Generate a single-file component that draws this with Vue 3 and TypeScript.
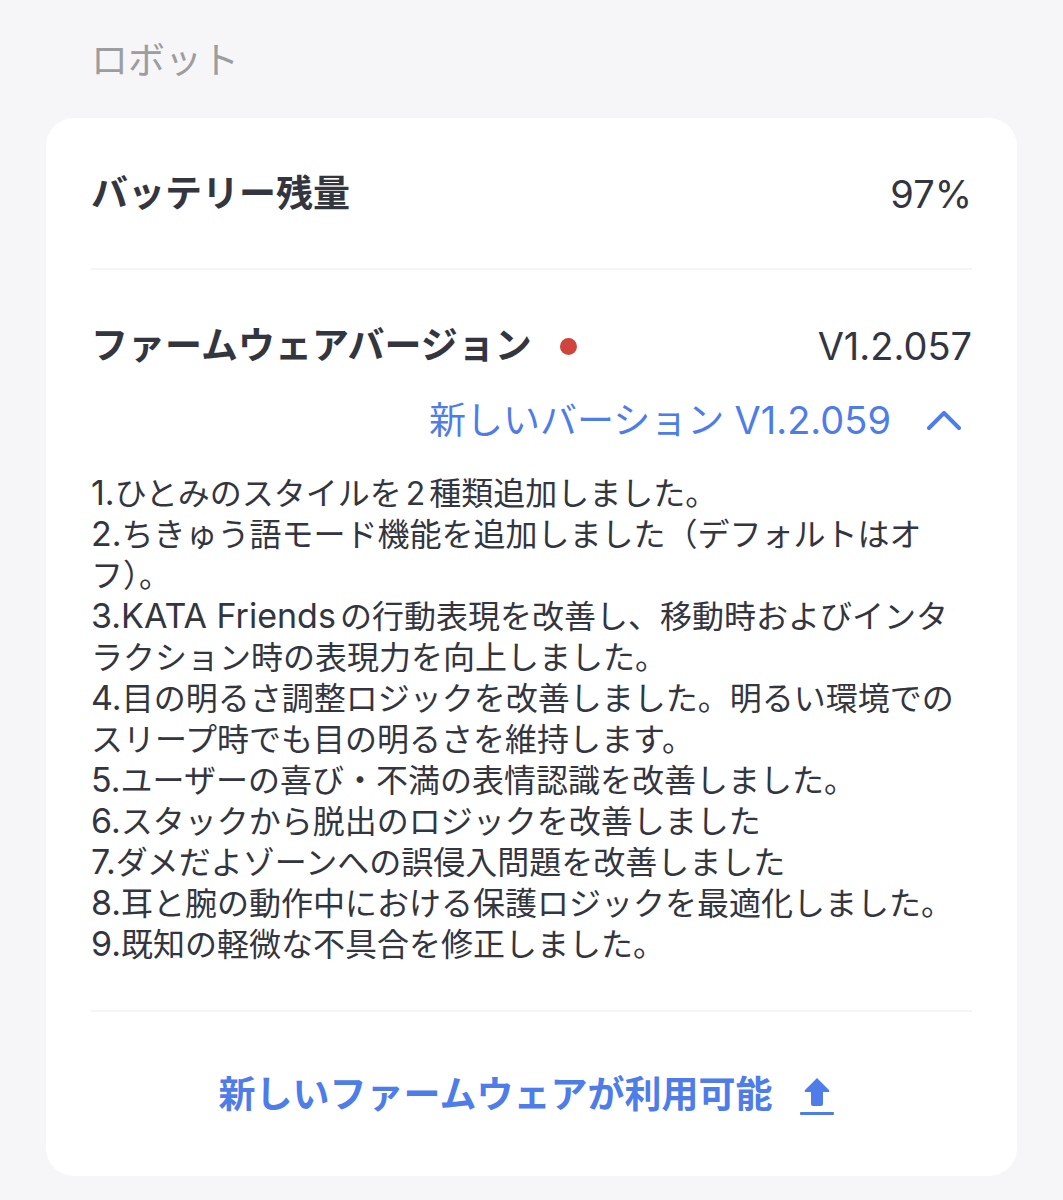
<script setup lang="ts">
import { ref } from 'vue'

interface Note {
  lead: string
  text: string
}

const expanded = ref<boolean>(true)
const battery = '97%'
const currentVersion = 'V1.2.057'
const newVersion = 'V1.2.059'

const notes: Note[] = [
  { lead: '1.', text: 'ひとみのスタイルを2種類追加しました。' },
  { lead: '2.', text: 'ちきゅう語モード機能を追加しました（デフォルトはオフ）。' },
  {
    lead: '3.KATA Friends',
    text: 'の行動表現を改善し、移動時およびインタラクション時の表現力を向上しました。',
  },
  {
    lead: '4.',
    text: '目の明るさ調整ロジックを改善しました。明るい環境でのスリープ時でも目の明るさを維持します。',
  },
  { lead: '5.', text: 'ユーザーの喜び・不満の表情認識を改善しました。' },
  { lead: '6.', text: 'スタックから脱出のロジックを改善しました' },
  { lead: '7.', text: 'ダメだよゾーンへの誤侵入問題を改善しました' },
  { lead: '8.', text: '耳と腕の動作中における保護ロジックを最適化しました。' },
  { lead: '9.', text: '既知の軽微な不具合を修正しました。' },
]
</script>

<template>
  <main class="page" lang="ja">
    <h1 class="section-title">ロボット</h1>
    <section class="card">
      <div class="row battery">
        <h2 class="label">バッテリー残量</h2>
        <span class="value">{{ battery }}</span>
      </div>
      <div class="firmware">
        <div class="row">
          <h2 class="label">ファームウェアバージョン<span class="dot"></span></h2>
          <span class="value">{{ currentVersion }}</span>
        </div>
        <button
          class="toggle"
          type="button"
          :aria-expanded="expanded"
          aria-controls="release-notes"
          @click="expanded = !expanded"
        >
          <span>新しいバーション <span class="version">{{ newVersion }}</span></span>
          <svg class="chevron" :class="{ closed: !expanded }" viewBox="0 0 36 20" aria-hidden="true">
            <path d="M3 17 18 2 33 17" />
          </svg>
        </button>
        <div v-show="expanded" id="release-notes" class="notes">
          <p v-for="note in notes" :key="note.lead"><span class="lead">{{ note.lead }}</span>{{ note.text }}</p>
        </div>
      </div>
      <button class="update" type="button">
        <span>新しいファームウェアが利用可能</span>
        <svg class="upload" viewBox="0 0 36 44" aria-hidden="true">
          <path
            d="M18 5 30 17Q31 19 29 19H24V31Q24 33 22 33H14Q12 33 12 31V19H7Q5 19 6 17Z"
          />
          <rect x="1" y="39" width="34" height="3" rx="1" />
        </svg>
      </button>
    </section>
  </main>
</template>

<style>
body {
  margin: 0;
  background: #f6f6f9;
}
</style>

<style scoped>
.page {
  padding: 33px 46px 24px;
  color: #33353f;
  font-family: Inter, 'Noto Sans CJK JP', sans-serif;
  font-size: 37px;
  line-height: 56px;
  text-autospace: normal;
}

h1,
h2,
p {
  margin: 0;
}

button {
  border: 0;
  padding: 0;
  background: none;
  color: #4e7ce8;
  font: inherit;
  cursor: pointer;
}

.section-title {
  padding: 0 45px;
  margin-bottom: 29px;
  color: #9c9d9f;
  font-size: 37px;
  font-weight: 400;
}

.card {
  padding: 0 45px;
  border-radius: 28px;
  background: #fff;
}

.row {
  display: flex;
  align-items: center;
  justify-content: space-between;
}

.battery {
  padding: 48px 0 46px;
  border-bottom: 2px solid #f5f4f6;
}

.label {
  display: flex;
  align-items: center;
  font-size: 37px;
  font-weight: 600;
}

.dot {
  width: 17px;
  height: 17px;
  margin-left: 28px;
  border-radius: 50%;
  background: #d0443e;
}

.value,
.version {
  font-size: 38px;
}

.firmware {
  padding: 48px 0 45px;
  border-bottom: 2px solid #f5f4f6;
}

.toggle {
  display: flex;
  align-items: center;
  gap: 35px;
  margin: 18px 0 24px auto;
  padding-right: 10px;
}

.chevron {
  width: 36px;
  height: 20px;
  fill: none;
  stroke: currentColor;
  stroke-width: 4;
  stroke-linecap: round;
  stroke-linejoin: round;
}

.closed {
  transform: rotate(180deg);
}

.notes {
  padding-right: 10px;
  font-size: 32px;
  line-height: 41px;
}

.lead {
  font-size: 34px;
  line-height: 32px;
}

.update {
  display: flex;
  align-items: center;
  justify-content: center;
  gap: 27px;
  width: 100%;
  padding: 55px 9px 53px 0;
  font-weight: 600;
}

.upload {
  width: 36px;
  height: 44px;
  fill: currentColor;
}
</style>
